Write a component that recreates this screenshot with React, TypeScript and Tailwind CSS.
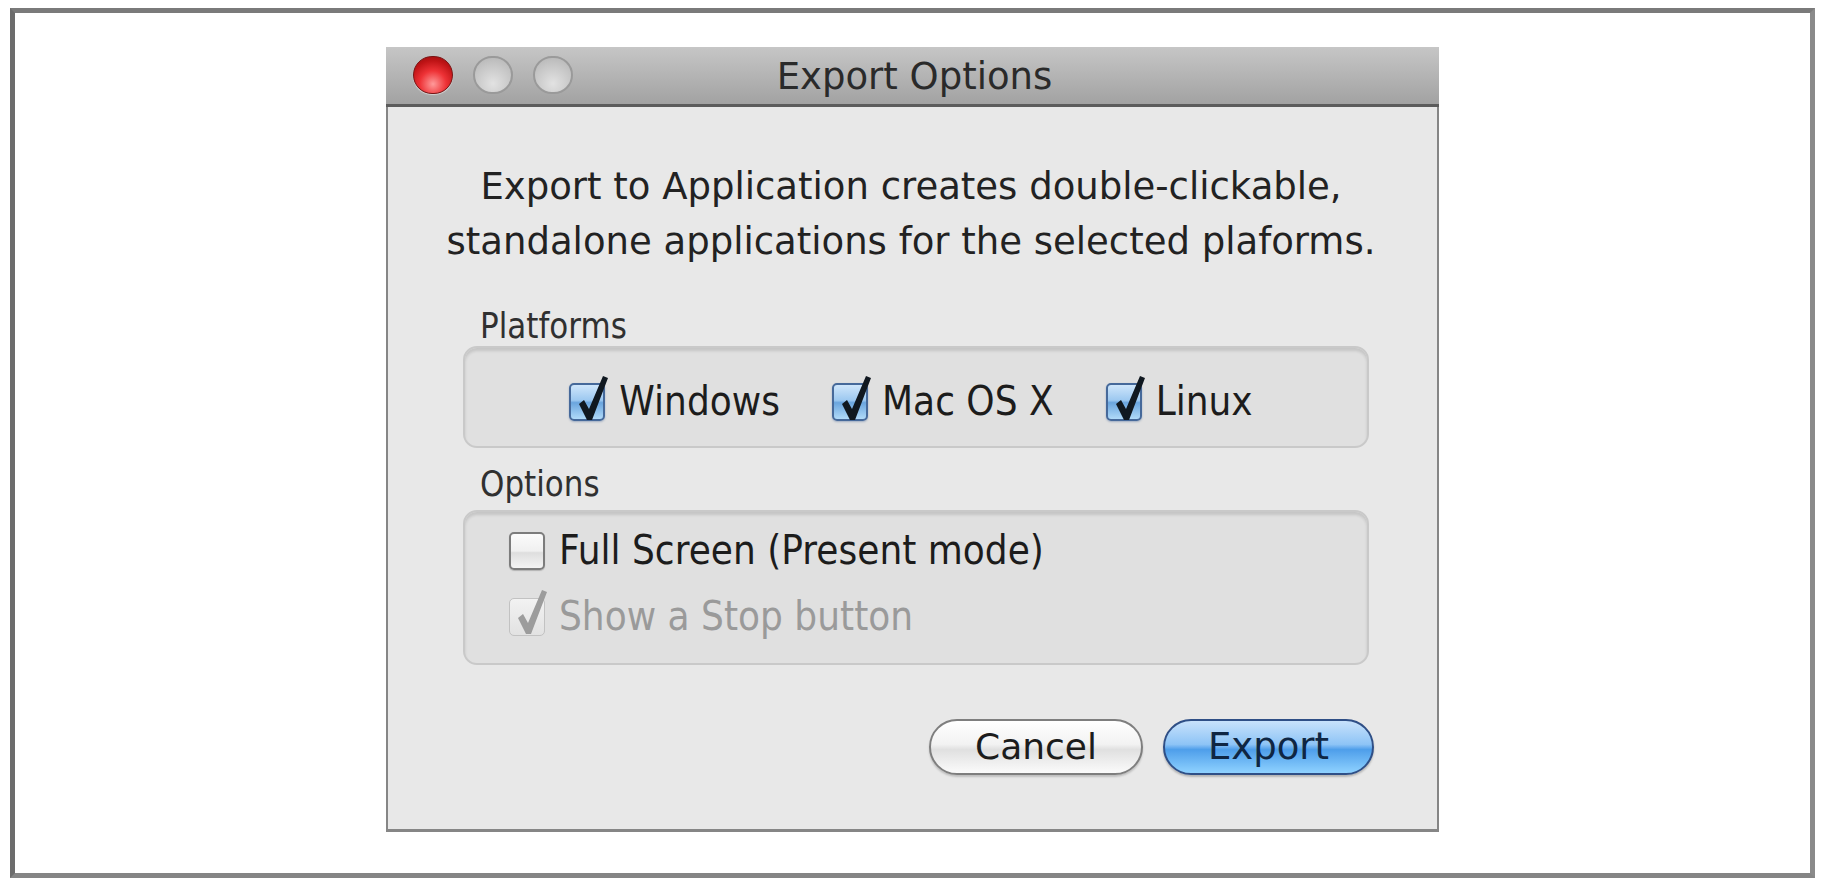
const font = "font-['DejaVu_Sans','Verdana',sans-serif]";

const platforms = ["Windows", "Mac OS X", "Linux"];

const CheckMark = ({ color }: { color: string }) => (
  <svg className="absolute left-[2px] top-[-11px] pointer-events-none" width="38" height="50" viewBox="0 0 38 50">
    <path d="M6 30 L11 26 L16 35 L30 2 L35 4 L19 46 L14 46 Z" fill={color} />
  </svg>
);

const AquaCheckbox = ({ checked, disabled }: { checked: boolean; disabled?: boolean }) => {
  if (disabled) {
    return (
      <span className="relative inline-block w-[36px] h-[38px] shrink-0 rounded-[5px] border border-[#c2c2c2] bg-[linear-gradient(#f2f2f2,#e2e2e2)]">
        {checked && <CheckMark color="#9c9c9c" />}
      </span>
    );
  }
  if (!checked) {
    return (
      <span className="relative inline-block w-[36px] h-[38px] shrink-0 rounded-[5px] border-[2px] border-[#7c7c7c] bg-[linear-gradient(#fbfbfb_0%,#f0f0f0_50%,#dedede_55%,#f4f4f4_100%)] shadow-[0_1px_1px_rgba(0,0,0,0.2)]" />
    );
  }
  return (
    <span className="relative inline-block w-[36px] h-[38px] shrink-0 rounded-[5px] border-[2px] border-[#46699a] bg-[linear-gradient(#cfe6fb_0%,#9cc8f0_45%,#6aa5de_52%,#b0daf9_100%)] shadow-[0_1px_2px_rgba(40,80,140,0.35)]">
      <CheckMark color="#101820" />
    </span>
  );
};

const TrafficLight = ({ active }: { active?: boolean }) =>
  active ? (
    <span className="inline-block w-[40px] h-[38px] rounded-full border border-[#7a1414] bg-[radial-gradient(circle_at_50%_75%,#ff9a9a_0%,#ee3236_40%,#c01416_70%,#8c0a0a_100%)] shadow-[0_1px_1px_rgba(255,255,255,0.5)]" />
  ) : (
    <span className="inline-block w-[40px] h-[38px] rounded-full border-[2px] border-[#9a9a9a] bg-[radial-gradient(circle_at_50%_75%,#e2e2e2_0%,#c6c6c6_60%,#b2b2b2_100%)]" />
  );

export default function App() {
  return (
    <div className={`min-h-screen bg-white pt-[8px] pl-[10px] ${font}`}>
      <div className="w-[1805px] h-[870px] border-[5px] border-[#6c6c6c] border-t-[#7a7a7a] border-r-[#8a8a8a] border-b-[#858585] flex justify-center pt-[34px]">
        {/* dialog */}
        <div className="w-[1053px] h-[785px] flex flex-col bg-[#e8e8e8] border-x-[2px] border-b-[3px] border-[#868686]">
          {/* title bar */}
          <div className="relative h-[60px] shrink-0 flex items-center justify-center bg-[linear-gradient(#c6c6c6,#a2a2a2)] border-b-[3px] border-[#5c5c5c] -mx-[2px]">
            <div className="absolute left-[27px] top-[9px] flex gap-[20px]">
              <TrafficLight active />
              <TrafficLight />
              <TrafficLight />
            </div>
            <span className="text-[37px] leading-[44px] text-[#2a2a2a] pt-[2px] pl-[4px]">Export Options</span>
          </div>

          {/* content */}
          <div className="flex flex-col pl-[75px] pr-[68px] pt-[52px]">
            <p className="-ml-[70px] -mr-[60px] whitespace-nowrap text-center text-[37px] leading-[55px] text-[#222222]">
              Export to Application creates double-clickable,
              <br />
              standalone applications for the selected plaforms.
            </p>

            <div className="mt-[37px] pl-[17px] text-[31px] leading-[40px] text-[#303030]">
              <span className="inline-block scale-y-[1.12]">Platforms</span>
            </div>
            <div className="h-[102px] pt-[10px] rounded-[14px] border-[2px] border-[#c9c9c9] bg-[#e0e0e0] shadow-[inset_0_3px_3px_rgba(0,0,0,0.12)] flex items-center justify-center gap-[52px] pr-[10px]">
              {platforms.map((p) => (
                <label key={p} className="flex items-center gap-[14px] text-[36px] text-[#1c1c1c] whitespace-nowrap">
                  <AquaCheckbox checked />
                  <span className="inline-block scale-y-[1.12]">{p}</span>
                </label>
              ))}
            </div>

            <div className="mt-[16px] mb-[6px] pl-[17px] text-[31px] leading-[40px] text-[#303030]">
              <span className="inline-block scale-y-[1.12]">Options</span>
            </div>
            <div className="h-[155px] rounded-[14px] border-[2px] border-[#c9c9c9] bg-[#e0e0e0] shadow-[inset_0_3px_3px_rgba(0,0,0,0.12)] flex flex-col pt-[14px] gap-[16px] pl-[44px]">
              <label className="h-[50px] flex items-center gap-[14px] text-[36px] text-[#1c1c1c] whitespace-nowrap">
                <AquaCheckbox checked={false} />
                <span className="inline-block scale-y-[1.12]">Full Screen (Present mode)</span>
              </label>
              <label className="h-[50px] flex items-center gap-[14px] text-[36px] text-[#9a9a9a] whitespace-nowrap">
                <AquaCheckbox checked disabled />
                <span className="inline-block scale-y-[1.12]">Show a Stop button</span>
              </label>
            </div>

            <div className="mt-[54px] flex justify-end gap-[20px] -mr-[5px]">
              <button className="w-[214px] h-[56px] rounded-full border-[2px] border-[#7e7e7e] bg-[linear-gradient(#ffffff_0%,#f2f2f2_45%,#e0e0e0_55%,#fbfbfb_100%)] text-[36px] leading-[40px] text-[#1c1c1c] shadow-[0_2px_2px_rgba(0,0,0,0.18)]">
                Cancel
              </button>
              <button className="w-[211px] h-[56px] rounded-full border-[2px] border-[#2f4f86] bg-[linear-gradient(#c8e2fb_0%,#8ec4f6_45%,#4e9eea_55%,#8fd2ff_100%)] text-[37px] leading-[40px] text-[#0f2643] shadow-[0_2px_2px_rgba(0,0,0,0.22)]">
                Export
              </button>
            </div>
          </div>
        </div>
      </div>
    </div>
  );
}
